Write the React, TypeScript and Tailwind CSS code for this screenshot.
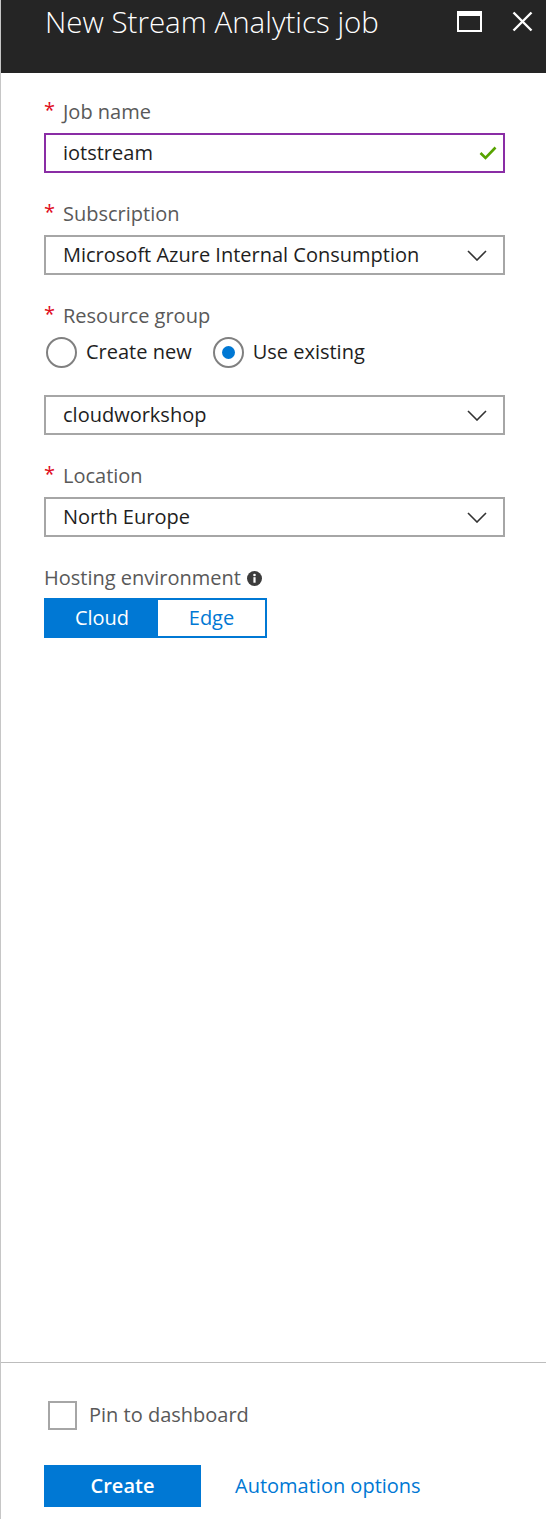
import React from "react";

const font = { fontFamily: '"Open Sans", "Noto Sans", sans-serif' };

function Chevron() {
  return (
    <svg width="20" height="11" viewBox="0 0 20 11" className="shrink-0">
      <path d="M1 1 L10 10 L19 1" fill="none" stroke="#333" strokeWidth="1.6" />
    </svg>
  );
}

function Label({ text, required = true }: { text: string; required?: boolean }) {
  return (
    <div className="h-[28px] flex items-center text-[20px] text-[#595959] leading-[28px]">
      {required && <span className="text-[#e00b1c] w-[19px] text-[20px] -mt-[4px]">*</span>}
      <span>{text}</span>
    </div>
  );
}

function Select({ value }: { value: string }) {
  return (
    <div className="h-[40px] border-2 border-[#a6a6a6] flex items-center justify-between pl-[17px] pr-[16px] text-[20px] text-[#1e1e1e]">
      <span>{value}</span>
      <Chevron />
    </div>
  );
}

function Radio({ checked, label }: { checked: boolean; label: string }) {
  return (
    <div className="flex items-center gap-[9px]">
      <div className="w-[31px] h-[31px] rounded-full border-2 border-[#808080] flex items-center justify-center bg-white">
        {checked && <div className="w-[13px] h-[13px] rounded-full bg-[#0078d4]" />}
      </div>
      <span className="text-[20px] text-[#1e1e1e]">{label}</span>
    </div>
  );
}

export default function App() {
  return (
    <div style={font} className="w-[546px] h-[1519px] flex flex-col bg-white border-l border-[#c6c6c6]">
      <div className="h-[73px] bg-[#252525] flex items-start justify-between pl-[44px] pr-[13px] shrink-0">
        <div className="text-white text-[29.5px] font-light leading-[44px]">New Stream Analytics job</div>
        <div className="flex items-center gap-[30px] mt-[11px]">
          <svg width="25" height="21" viewBox="0 0 25 21">
            <rect x="1" y="1" width="23" height="19" fill="none" stroke="white" strokeWidth="2" />
            <rect x="1" y="1" width="23" height="4" fill="white" />
          </svg>
          <svg width="21" height="21" viewBox="0 0 21 21">
            <path d="M1.5 1.5 L19.5 19.5 M19.5 1.5 L1.5 19.5" stroke="white" strokeWidth="2.4" />
          </svg>
        </div>
      </div>

      <div className="flex-1 flex flex-col pl-[43px] pr-[41px] pt-[25px]">
        <Label text="Job name" />
        <div className="mt-[7px] h-[40px] border-2 border-[#8a2da5] flex items-center justify-between pl-[17px] pr-[6px] text-[20px] text-[#1e1e1e]">
          <span>iotstream</span>
          <svg width="18" height="14" viewBox="0 0 18 14">
            <path d="M1.5 7 L6.5 12 L16.5 1.5" fill="none" stroke="#57a300" strokeWidth="2.6" />
          </svg>
        </div>

        <div className="mt-[27px]"><Label text="Subscription" /></div>
        <div className="mt-[7px]"><Select value="Microsoft Azure Internal Consumption" /></div>

        <div className="mt-[27px]"><Label text="Resource group" /></div>
        <div className="mt-[7px] h-[30px] flex items-center gap-[21px] pl-[2px]">
          <Radio checked={false} label="Create new" />
          <Radio checked={true} label="Use existing" />
        </div>
        <div className="mt-[28px]"><Select value="cloudworkshop" /></div>

        <div className="mt-[27px]"><Label text="Location" /></div>
        <div className="mt-[7px]"><Select value="North Europe" /></div>

        <div className="mt-[27px] h-[28px] flex items-center gap-[6px] text-[20px] text-[#595959]">
          <span>Hosting environment</span>
          <svg width="15" height="15" viewBox="0 0 15 15">
            <circle cx="7.5" cy="7.5" r="7.5" fill="#3c3c3c" />
            <circle cx="7.5" cy="4" r="1.3" fill="white" />
            <rect x="6.4" y="6.2" width="2.2" height="5.5" fill="white" />
          </svg>
        </div>
        <div className="mt-[6px] flex h-[40px] w-[223px] border-2 border-[#0078d4] text-[20px]">
          <div className="w-[112px] bg-[#0078d4] text-white flex items-center justify-center">Cloud</div>
          <div className="flex-1 bg-white text-[#0078d4] flex items-center justify-center">Edge</div>
        </div>
      </div>

      <div className="h-[157px] shrink-0 border-t border-[#bdbdbd] flex flex-col px-[43px]">
        <div className="mt-[37px] flex items-center gap-[12px] pl-[4px]">
          <div className="w-[29px] h-[29px] border-2 border-[#a6a6a6] bg-white" />
          <span className="text-[20px] text-[#595959]">Pin to dashboard</span>
        </div>
        <div className="mt-[35px] flex items-center gap-[34px]">
          <div className="w-[157px] h-[42px] bg-[#0078d4] text-white text-[20px] font-semibold flex items-center justify-center">Create</div>
          <span className="text-[20px] text-[#0078d4]">Automation options</span>
        </div>
      </div>
    </div>
  );
}
